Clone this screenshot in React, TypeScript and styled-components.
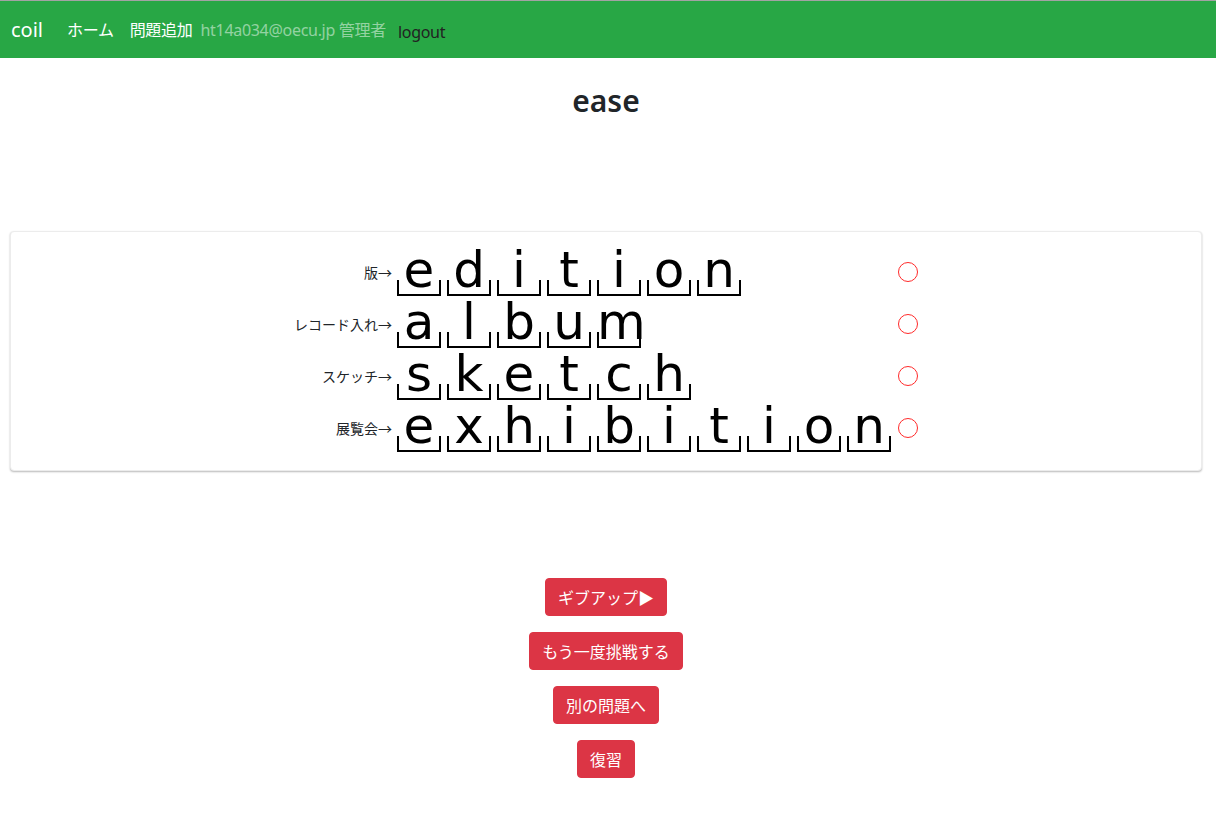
import React from "react";
import styled, { createGlobalStyle } from "styled-components";

const Global = createGlobalStyle`
  html, body { margin: 0; padding: 0; background: #fff; }
  body {
    font-family: "Noto Sans", "Noto Sans CJK JP", sans-serif;
    color: #212529;
  }
`;

const Navbar = styled.nav`
  height: 57px;
  border-top: 1px solid #a3a3a3;
  background: #28a745;
  display: flex;
  align-items: center;
  padding: 0 11px;
  box-sizing: content-box;
`;

const Brand = styled.span`
  font-size: 20px;
  color: #fff;
  margin-right: 24px;
  line-height: 1;
  margin-top: 1px;
`;

const NavItem = styled.span<{ $tone: "white" | "muted" | "dark"; $gap: number }>`
  font-size: 16px;
  letter-spacing: -0.3px;
  color: ${(p) =>
    p.$tone === "white" ? "#fff" : p.$tone === "muted" ? "rgba(255,255,255,0.5)" : "#222"};
  margin-right: ${(p) => p.$gap}px;
  line-height: 1;
  margin-top: ${(p) => (p.$tone === "dark" ? 5 : 0)}px;
`;

const Main = styled.main`
  padding: 0 14px 0 10px;
`;

const Title = styled.h3`
  margin: 25px 0 0;
  text-align: center;
  font-size: 30px;
  font-weight: 600;
  line-height: 36px;
  color: #212529;
`;

const Card = styled.section`
  margin-top: 112px;
  border: 1px solid #ececec;
  border-radius: 4px;
  box-shadow: 0 1px 2px rgba(0, 0, 0, 0.28);
  padding: 12px 0 18px;
  background: #fff;
`;

const Board = styled.div`
  display: grid;
  grid-template-columns: auto auto auto;
  justify-content: center;
`;

const Hint = styled.div`
  font-family: "Noto Sans CJK JP", sans-serif;
  font-size: 14px;
  color: #212529;
  text-align: right;
  align-self: center;
  padding-right: 2px;
  margin-top: 4px;
  white-space: nowrap;
`;

const Word = styled.div`
  display: flex;
  height: 52px;
`;

const Letter = styled.span`
  position: relative;
  width: 44px;
  margin: 0 3px;
  text-align: center;
  font-family: "DejaVu Sans", Verdana, sans-serif;
  font-size: 50px;
  line-height: 52px;
  color: #000;

  &::after {
    content: "";
    position: absolute;
    left: 0;
    right: 0;
    bottom: 0;
    height: 16px;
    box-sizing: border-box;
    border: 2px solid #000;
    border-top: none;
  }
`;

const Mark = styled.div`
  padding-left: 4px;
  display: flex;
  align-items: center;
  padding-top: 3px;
`;

const Ring = styled.span`
  width: 18px;
  height: 18px;
  border: 1px solid #ff2a2a;
  border-radius: 50%;
`;

const Actions = styled.div`
  margin-top: 107px;
  display: flex;
  flex-direction: column;
  align-items: center;
  gap: 16px;
`;

const DangerButton = styled.button`
  font-family: "Noto Sans CJK JP", sans-serif;
  font-size: 16px;
  line-height: 24px;
  padding: 6px 12px;
  color: #fff;
  background: #dc3545;
  border: 1px solid #dc3545;
  border-radius: 4px;
  cursor: pointer;
`;

const words: { hint: string; word: string }[] = [
  { hint: "版→", word: "edition" },
  { hint: "レコード入れ→", word: "album" },
  { hint: "スケッチ→", word: "sketch" },
  { hint: "展覧会→", word: "exhibition" },
];

const buttons = ["ギブアップ▶", "もう一度挑戦する", "別の問題へ", "復習"];

export default function App() {
  return (
    <>
      <Global />
      <Navbar>
        <Brand>coil</Brand>
        <NavItem $tone="white" $gap={16}>ホーム</NavItem>
        <NavItem $tone="white" $gap={8}>問題追加</NavItem>
        <NavItem $tone="muted" $gap={12}>ht14a034@oecu.jp 管理者</NavItem>
        <NavItem $tone="dark" $gap={0}>logout</NavItem>
      </Navbar>
      <Main>
        <Title>ease</Title>
        <Card>
          <Board>
            {words.map((w) => (
              <React.Fragment key={w.word}>
                <Hint>{w.hint}</Hint>
                <Word>
                  {w.word.split("").map((c, i) => (
                    <Letter key={i}>{c}</Letter>
                  ))}
                </Word>
                <Mark>
                  <Ring />
                </Mark>
              </React.Fragment>
            ))}
          </Board>
        </Card>
        <Actions>
          {buttons.map((b) => (
            <DangerButton key={b}>{b}</DangerButton>
          ))}
        </Actions>
      </Main>
    </>
  );
}
